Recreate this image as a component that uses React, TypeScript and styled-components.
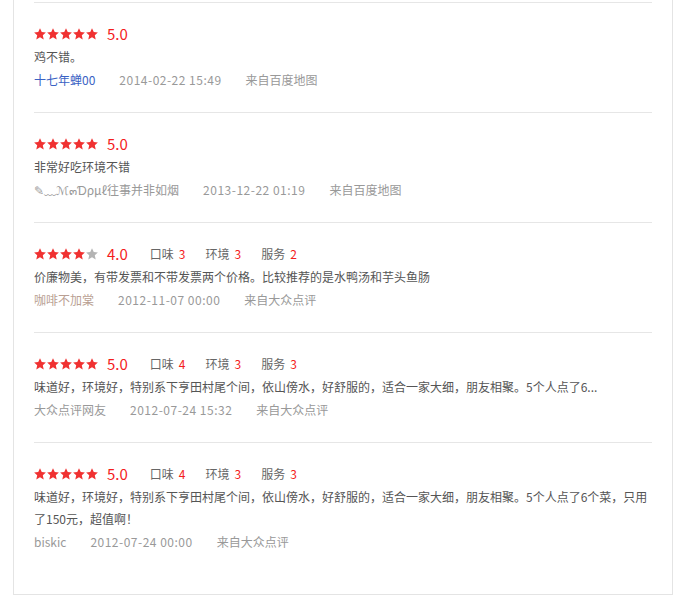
import React from "react";
import styled, { createGlobalStyle } from "styled-components";

const GlobalStyle = createGlobalStyle`
  html, body {
    margin: 0;
    padding: 0;
    background: #fff;
  }
  body {
    font-family: "Noto Sans CJK SC", "Liberation Sans", sans-serif;
    font-size: 12px;
    color: #555;
  }
`;

interface SubScore {
  label: string;
  value: number;
}

interface Review {
  rating: number;
  scores?: SubScore[];
  text: string;
  user: string;
  userColor?: string;
  time: string;
  source: string;
}

const reviews: Review[] = [
  {
    rating: 5,
    text: "鸡不错。",
    user: "十七年蝉00",
    userColor: "#3a62c4",
    time: "2014-02-22 15:49",
    source: "来自百度地图",
  },
  {
    rating: 5,
    text: "非常好吃环境不错",
    user: "✎﹏ℳ๓Ɗρμℓ往事并非如烟",
    time: "2013-12-22 01:19",
    source: "来自百度地图",
  },
  {
    rating: 4,
    scores: [
      { label: "口味", value: 3 },
      { label: "环境", value: 3 },
      { label: "服务", value: 2 },
    ],
    text: "价廉物美，有带发票和不带发票两个价格。比较推荐的是水鸭汤和芋头鱼肠",
    user: "咖啡不加棠",
    userColor: "#b99f93",
    time: "2012-11-07 00:00",
    source: "来自大众点评",
  },
  {
    rating: 5,
    scores: [
      { label: "口味", value: 4 },
      { label: "环境", value: 3 },
      { label: "服务", value: 3 },
    ],
    text: "味道好，环境好，特别系下亨田村尾个间，依山傍水，好舒服的，适合一家大细，朋友相聚。5个人点了6...",
    user: "大众点评网友",
    time: "2012-07-24 15:32",
    source: "来自大众点评",
  },
  {
    rating: 5,
    scores: [
      { label: "口味", value: 4 },
      { label: "环境", value: 3 },
      { label: "服务", value: 3 },
    ],
    text: "味道好，环境好，特别系下亨田村尾个间，依山傍水，好舒服的，适合一家大细，朋友相聚。5个人点了6个菜，只用了150元，超值啊！",
    user: "biskic",
    time: "2012-07-24 00:00",
    source: "来自大众点评",
  },
];

const Panel = styled.div`
  box-sizing: border-box;
  width: 660px;
  margin-left: 13px;
  padding: 2px 20px 20px;
  border: 1px solid #e4e4e4;
  border-top: none;
`;

const Item = styled.div`
  padding: 20px 0 21px;
  border-top: 1px solid #e6e6e6;
`;

const RatingRow = styled.div`
  display: flex;
  align-items: center;
  height: 22px;
`;

const Stars = styled.div`
  display: flex;
  gap: 1px;
`;

const Score = styled.span`
  margin-left: 9px;
  font-size: 15px;
  line-height: 22px;
  color: #f41c1c;
`;

const SubScores = styled.div`
  display: flex;
  margin-left: 22px;
  gap: 20px;
`;

const SubLabel = styled.span`
  color: #666;
  line-height: 22px;
`;

const SubValue = styled.span`
  margin-left: 5px;
  color: #f41c1c;
`;

const Comment = styled.p`
  margin: 1px 0 0;
  line-height: 22px;
  color: #555;
`;

const Meta = styled.div`
  display: flex;
  margin-top: 1px;
  line-height: 22px;
  color: #999;
  gap: 24px;
`;

const User = styled.span<{ $color?: string }>`
  color: ${(p) => p.$color || "#999"};
`;

const Time = styled.span`
  letter-spacing: 0.5px;
`;

const Star = ({ on }: { on: boolean }) => (
  <svg width="12" height="12" viewBox="0 0 24 24">
    <path
      d="M12 .6l3.5 7.6 8.3.9-6.2 5.6 1.8 8.2L12 18.7l-7.4 4.2 1.8-8.2L.2 9.1l8.3-.9z"
      fill={on ? "#f03131" : "#b4b4b4"}
    />
  </svg>
);

const App = () => (
  <>
    <GlobalStyle />
    <Panel>
      {reviews.map((r, idx) => (
        <Item key={idx}>
          <RatingRow>
            <Stars>
              {[0, 1, 2, 3, 4].map((i) => (
                <Star key={i} on={i < r.rating} />
              ))}
            </Stars>
            <Score>{r.rating.toFixed(1)}</Score>
            {r.scores && (
              <SubScores>
                {r.scores.map((s) => (
                  <SubLabel key={s.label}>
                    {s.label}
                    <SubValue>{s.value}</SubValue>
                  </SubLabel>
                ))}
              </SubScores>
            )}
          </RatingRow>
          <Comment>{r.text}</Comment>
          <Meta>
            <User $color={r.userColor}>{r.user}</User>
            <Time>{r.time}</Time>
            <span>{r.source}</span>
          </Meta>
        </Item>
      ))}
    </Panel>
  </>
);

export default App;
